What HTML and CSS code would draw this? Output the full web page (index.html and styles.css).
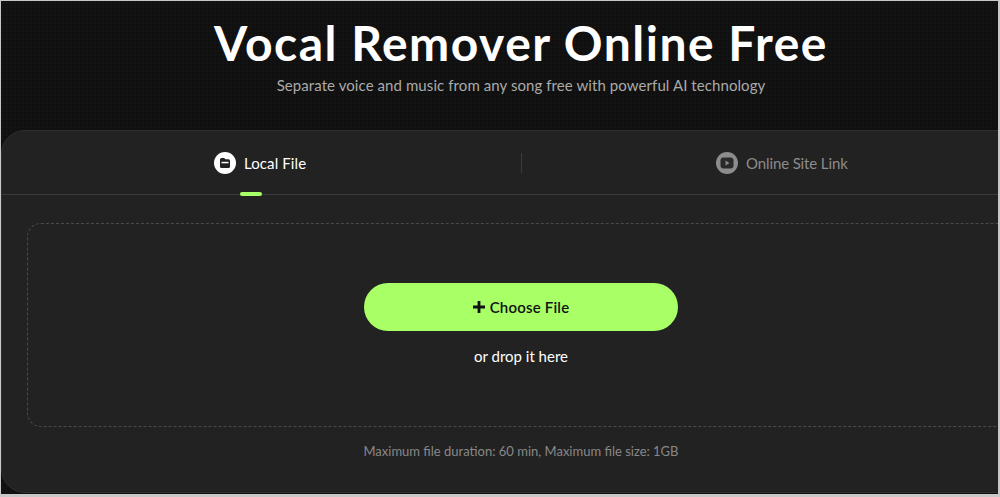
FILE: index.html
```html
<!DOCTYPE html>
<html lang="en">

<head>
  <meta charset="UTF-8">
  <meta name="viewport" content="width=device-width, initial-scale=1.0">
  <title>Vocal Remover Online Free</title>
  <link rel="stylesheet" href="styles.css">
</head>

<body>
  <div class="frame">
    <div class="page">
      <div class="hero">
        <h1>Vocal Remover Online Free</h1>
        <p>Separate voice and music from any song free with powerful AI technology</p>
      </div>

      <div class="card">
        <ul class="tabs">
          <li class="tab active">
            <svg class="tab-icon" viewBox="0 0 22 22">
              <circle cx="11" cy="11" r="11" fill="#fff"/>
              <path d="M6 7.5A1.5 1.5 0 0 1 7.500 6h2.600l1.400 1.300h3A1.500 1.500 0 0 1 16 8.800v5.700a1.500 1.500 0 0 1-1.500 1.500h-7A1.500 1.500 0 0 1 6 14.500z" fill="#222"/>
              <rect x="7.500" y="9.800" width="7" height="1.500" fill="#fff"/>
            </svg>
            <span>Local File</span>
          </li>
          <li class="tab">
            <svg class="tab-icon" viewBox="0 0 22 22">
              <circle cx="11" cy="11" r="11" fill="#8c8c8c"/>
              <rect x="4.500" y="5.500" width="13" height="11" rx="3" fill="#2a2a2a"/>
              <path d="M9.500 8.600l4 2.400-4 2.400z" fill="#8c8c8c"/>
            </svg>
            <span>Online Site Link</span>
          </li>
        </ul>

        <div class="drop-zone">
          <button class="choose-btn">
            <svg class="plus" viewBox="0 0 12 12">
              <path d="M4.600 0h2.800v4.600H12v2.800H7.400V12H4.600V7.400H0V4.600h4.600z" fill="#111"/>
            </svg>
            Choose File
          </button>
          <div class="drop-hint">or drop it here</div>
        </div>

        <div class="limits">Maximum file duration: 60 min, Maximum file size: 1GB</div>
      </div>
    </div>
  </div>
</body>

</html>
```

FILE: styles.css
```css
* {
  box-sizing: border-box;
}

ul,
li {
  margin: 0;
  padding: 0;
  list-style: none;
}

body {
  margin: 0;
  height: 497px;
  padding: 1px 2px 3px 1px;
  background: #c8c8c8;
  font-family: "Lato", "Liberation Sans", sans-serif;
  overflow: hidden;
}

.frame {
  height: 100%;
  overflow: hidden;
  background-color: #101010;
  background-image: radial-gradient(#141414 1px, transparent 1px);
  background-size: 4px 4px;
}

.page {
  width: 1040px;
}

.hero {
  height: 129px;
  padding-top: 14px;
  text-align: center;
}

.hero h1 {
  margin: 0;
  font-size: 48px;
  line-height: 56px;
  font-weight: 700;
  letter-spacing: 1.5px;
  color: #fff;
}

.hero p {
  margin: 4px 0 0;
  font-size: 15px;
  line-height: 20px;
  letter-spacing: 0.08px;
  color: #aaa;
}

.card {
  height: 363px;
  background: #222;
  border: 1px solid #2f2f2f;
  border-radius: 24px 24px 0 24px;
}

.tabs {
  display: flex;
  height: 64px;
  border-bottom: 1px solid #3a3a3a;
}

.tab {
  position: relative;
  flex: 0 0 50%;
  display: flex;
  align-items: center;
  gap: 8px;
  font-size: 15px;
  color: #8c8c8c;
}

.tab:first-child {
  padding-left: 212px;
}

.tab:last-child {
  padding-left: 195px;
  letter-spacing: -0.12px;
}

.tab:first-child::after {
  content: "";
  position: absolute;
  right: -1px;
  top: 22px;
  height: 20px;
  border-right: 1px solid #3a3a3a;
}

.tab.active {
  color: #fff;
  letter-spacing: 0.1px;
}

.tab.active::before {
  content: "";
  position: absolute;
  left: 238px;
  bottom: -2px;
  width: 22px;
  height: 4px;
  border-radius: 2px;
  background: #a8ff66;
}

.tab-icon {
  width: 22px;
  height: 22px;
}

.drop-zone {
  display: flex;
  flex-direction: column;
  align-items: center;
  height: 204px;
  margin: 28px 25px 0;
  padding-top: 59px;
  border: 1px dashed #4a4a4a;
  border-radius: 14px;
}

.choose-btn {
  display: flex;
  align-items: center;
  justify-content: center;
  gap: 5px;
  width: 314px;
  height: 48px;
  border: none;
  border-radius: 24px;
  background: #a8ff66;
  color: #111;
  font-family: inherit;
  font-size: 15px;
  font-weight: 600;
  letter-spacing: 0.2px;
}

.plus {
  width: 12px;
  height: 12px;
}

.drop-hint {
  margin-top: 15px;
  font-size: 15px;
  line-height: 20px;
  color: #fff;
}

.limits {
  margin-top: 15px;
  text-align: center;
  font-size: 13px;
  line-height: 18px;
  color: #888;
}
```
